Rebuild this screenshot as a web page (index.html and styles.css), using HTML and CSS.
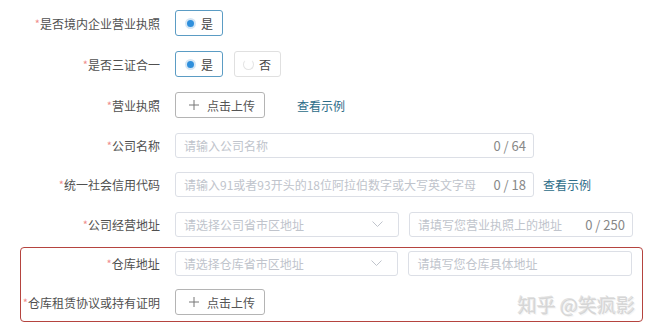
FILE: index.html
```html
<!DOCTYPE html>
<html lang="zh-CN">
<head>
<meta charset="UTF-8">
<title>企业信息</title>
<link rel="stylesheet" href="styles.css">
</head>
<body>
    <div class="form">
        <div class="row loose">
            <label class="label"><i>*</i>是否境内企业营业执照</label>
            <div class="radios">
                <span class="radio checked"><span class="dot"></span>是</span>
            </div>
        </div>
        <div class="row loose">
            <label class="label"><i>*</i>是否三证合一</label>
            <div class="radios">
                <span class="radio checked"><span class="dot"></span>是</span>
                <span class="radio"><span class="dot"></span>否</span>
            </div>
        </div>
        <div class="row">
            <label class="label"><i>*</i>营业执照</label>
            <span class="upload"><svg width="10" height="10" viewBox="0 0 10 10"><path d="M5 0v10M0 5h10" stroke="#777" stroke-width="1"/></svg>点击上传</span>
            <a class="link far">查看示例</a>
        </div>
        <div class="row tight">
            <label class="label"><i>*</i>公司名称</label>
            <div class="input wide"><span class="ph">请输入公司名称</span><span class="count">0 / 64</span></div>
        </div>
        <div class="row">
            <label class="label"><i>*</i>统一社会信用代码</label>
            <div class="input wide"><span class="ph">请输入91或者93开头的18位阿拉伯数字或大写英文字母</span><span class="count">0 / 18</span></div>
            <a class="link">查看示例</a>
        </div>
        <div class="row last">
            <label class="label"><i>*</i>公司经营地址</label>
            <div class="input half"><span class="ph">请选择公司省市区地址</span><svg class="arrow" width="11" height="6" viewBox="0 0 11 6"><path d="M0.5 0.5l5 5 5-5" fill="none" stroke="#c0c4cc"/></svg></div>
            <div class="input half"><span class="ph">请填写您营业执照上的地址</span><span class="count">0 / 250</span></div>
        </div>
        <div class="group">
            <div class="row">
                <label class="label"><i>*</i>仓库地址</label>
                <div class="input half"><span class="ph">请选择仓库省市区地址</span><svg class="arrow" width="11" height="6" viewBox="0 0 11 6"><path d="M0.5 0.5l5 5 5-5" fill="none" stroke="#c0c4cc"/></svg></div>
                <div class="input half"><span class="ph">请填写您仓库具体地址</span></div>
            </div>
            <div class="row">
                <label class="label"><i>*</i>仓库租赁协议或持有证明</label>
                <span class="upload"><svg width="10" height="10" viewBox="0 0 10 10"><path d="M5 0v10M0 5h10" stroke="#777" stroke-width="1"/></svg>点击上传</span>
            </div>
        </div>
    </div>
    <div class="mark">知乎 @笑疯影</div>
</body>
</html>
```
FILE: styles.css
```css
*{margin:0;padding:0;box-sizing:border-box}
body{width:657px;height:334px;background:#fff;font-family:"Noto Sans CJK SC","Microsoft YaHei",sans-serif;font-size:12px;color:#555;position:relative;overflow:hidden}
.form{padding-top:10px}
.row{display:flex;align-items:center;height:26px;margin-bottom:14px}
.row.loose{margin-bottom:15px}
.row.tight{margin-bottom:13px}
.row.last{margin-bottom:10px}
.label{width:160px;margin-right:15px;text-align:right;white-space:nowrap;color:#505050}
.label i{font-style:normal;color:#f08c8c;font-size:11px;vertical-align:1px}
.radios{display:flex;gap:11px}
.radio{display:flex;align-items:center;height:26px;padding:0 9px 0 8px;border:1px solid #e0e0e0;border-radius:3px;color:#444}
.radio .dot{width:11px;height:11px;border-radius:50%;border:1px solid #e4e4e4;margin-right:5px;border-top-color:#fff}
.radio.checked{border-color:#5b9cc4;padding-left:9px}
.radio.checked .dot{background:#2f8fdc;border:2px solid #d4e6f5}
.upload{display:flex;align-items:center;height:26px;width:90px;padding-left:13px;border:1px solid #b4b4b4;border-radius:3px;color:#555}
.upload svg{margin-right:8px}
.link{color:#2c6c88;text-decoration:none}
.far{margin-left:32px}
.input{display:flex;align-items:center;height:25px;padding:0 7px 0 8px;border:1px solid #dcdfe6;border-radius:3px;margin-right:9px}
.wide{width:359px}
.half{width:224px;margin-right:10px}
.ph{flex:1;color:#c0c4cc;white-space:nowrap;overflow:hidden}
.count{color:#888;font-size:13px}
.arrow{margin-right:8px}
.group{margin-left:20px;width:623px;height:75px;border:1px solid #b5443f;border-radius:4px;padding-top:2px}
.group .label{width:139px}
.group .row{margin-bottom:13px}
.mark{position:absolute;left:518px;top:291px;font-size:19px;color:#d6d6d6;text-shadow:1px 1px 0 #f6f6f6,-1px -1px 0 #e2e2e2;white-space:nowrap}
```
